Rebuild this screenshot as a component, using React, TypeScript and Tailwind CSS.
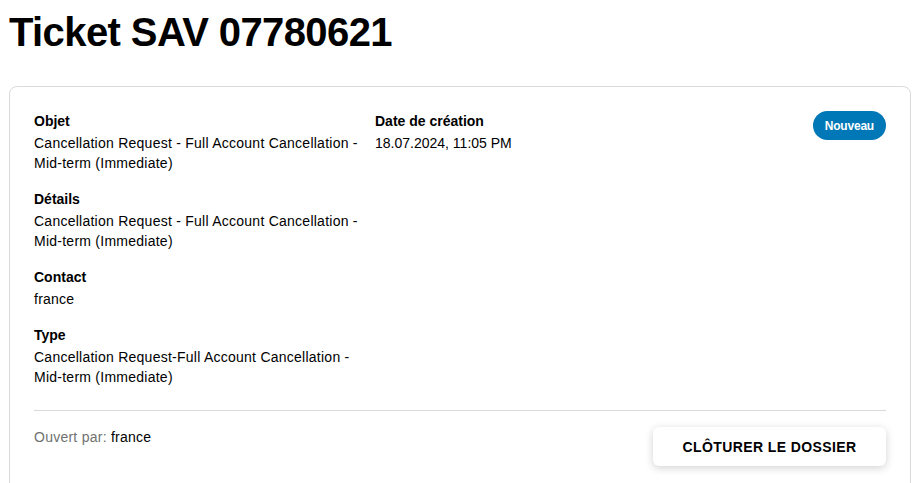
const fields = [
  { label: 'Objet', value: 'Cancellation Request - Full Account Cancellation - Mid-term (Immediate)' },
  { label: 'Détails', value: 'Cancellation Request - Full Account Cancellation - Mid-term (Immediate)' },
  { label: 'Contact', value: 'france' },
  { label: 'Type', value: 'Cancellation Request-Full Account Cancellation - Mid-term (Immediate)' },
];

export default function App() {
  return (
    <div className="min-h-screen bg-white pl-[9px] pr-[11px] text-black font-['Liberation_Sans',Arial,sans-serif]">
      <h1 className="pt-[9px] text-[40px] leading-[46px] font-bold tracking-[-0.6px]">Ticket SAV 07780621</h1>

      <div className="mt-[31px] rounded-lg border border-[#d8dada] px-6 pt-[24px] pb-6">
        <div className="flex tracking-[0.25px]">
          {/* Left column */}
          <div className="w-[341px] flex flex-col gap-4 pr-2">
            {fields.map(f => (
              <div key={f.label} className="text-sm leading-5">
                <div className="font-bold mb-[2px] tracking-normal">{f.label}</div>
                <div>{f.value}</div>
              </div>
            ))}
          </div>

          {/* Creation date */}
          <div className="text-sm leading-5 flex-1 tracking-normal">
            <div className="font-bold mb-[2px]">Date de création</div>
            <div>18.07.2024, 11:05 PM</div>
          </div>

          <div>
            <span className="inline-flex h-[29px] items-center rounded-full bg-[#0077b6] px-[12px] text-xs font-bold tracking-[-0.2px] text-white">
              Nouveau
            </span>
          </div>
        </div>

        <div className="mt-[23px] border-t border-[#d8dada]" />

        <div className="flex items-start justify-between pt-[16px]">
          <div className="text-sm leading-5 tracking-[0.25px]">
            <span className="text-[#6f7171]">Ouvert par: </span>
            <span>france</span>
          </div>
          <button className="h-[39px] w-[233px] rounded-md bg-white text-sm font-bold tracking-[0.4px] shadow-[0_2px_8px_rgba(0,0,0,0.18)]">
            CLÔTURER LE DOSSIER
          </button>
        </div>
      </div>
    </div>
  );
}
